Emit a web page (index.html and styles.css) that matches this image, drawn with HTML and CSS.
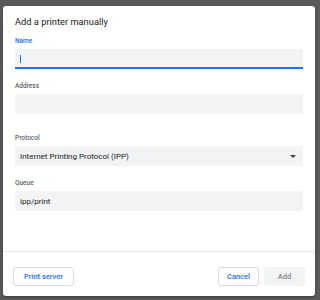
FILE: index.html
```html
<!DOCTYPE html>
<html>
<head>
<meta charset="utf-8">
<link rel="stylesheet" href="styles.css">
</head>
<body>
<div class="dialog">
  <div class="body">
    <div class="title">Add a printer manually</div>
    <div class="field">
      <div class="label active">Name</div>
      <div class="input focused"><span class="caret"></span></div>
    </div>
    <div class="field field-gap">
      <div class="label">Address</div>
      <div class="input"></div>
    </div>
    <div class="field">
      <div class="label">Protocol</div>
      <div class="input select">
        <span class="value">Internet Printing Protocol (IPP)</span>
        <span class="arrow"></span>
      </div>
    </div>
    <div class="field">
      <div class="label">Queue</div>
      <div class="input"><span class="value">ipp/print</span></div>
    </div>
  </div>
  <div class="footer">
    <button class="btn">Print server</button>
    <div class="spacer"></div>
    <button class="btn">Cancel</button>
    <button class="btn disabled">Add</button>
  </div>
</div>
</body>
</html>
```

FILE: styles.css
```css
html, body {
  margin: 0;
  padding: 0;
}
body {
  background: #5a5a5a;
  width: 320px;
  height: 300px;
  overflow: hidden;
  font-family: Roboto, "Liberation Sans", sans-serif;
  padding: 6px 0 0 3px;
  box-sizing: border-box;
}
.dialog {
  width: 312px;
  height: 290px;
  background: #fff;
  border-radius: 3px;
  box-shadow: 0 1px 3px rgba(0,0,0,0.35);
  display: flex;
  flex-direction: column;
}
.body {
  flex: 1;
  padding: 9px 12px 0 12px;
  border-bottom: 1px solid #e6e6e6;
}
.title {
  font-size: 9.3px;
  line-height: 14px;
  color: #202124;
  margin-bottom: 8px;
}
.field {
  margin-bottom: 13px;
}
.field-gap {
  margin-bottom: 20px;
}
.label {
  font-size: 6.5px;
  line-height: 8px;
  height: 8px;
  color: #5f6368;
  font-weight: 500;
  margin-bottom: 4px;
}
.label.active {
  color: #1a73e8;
}
.input {
  height: 20px;
  background: #f1f3f4;
  border-radius: 2px;
  box-sizing: border-box;
  display: flex;
  align-items: center;
  padding: 0 5px;
}
.input.focused {
  border-bottom: 2px solid #1a73e8;
  border-radius: 2px 2px 0 0;
  padding-top: 2px;
}
.caret {
  width: 1px;
  height: 8px;
  background: #1a73e8;
}
.value {
  font-size: 8px;
  font-weight: 400;
  color: #202124;
}
.select {
  justify-content: space-between;
}
.arrow {
  width: 0;
  height: 0;
  border-left: 3.5px solid transparent;
  border-right: 3.5px solid transparent;
  border-top: 3.5px solid #3c4043;
  margin-right: 2px;
}
.footer {
  height: 44px;
  display: flex;
  align-items: flex-start;
  padding: 15px 10px 0 10px;
  box-sizing: border-box;
  gap: 5px;
}
.spacer {
  flex: 1;
}
.btn {
  height: 19px;
  font-family: Roboto, "Liberation Sans", sans-serif;
  font-size: 7.5px;
  font-weight: 500;
  color: #1a73e8;
  background: #fff;
  border: 1px solid #dadce0;
  border-radius: 3px;
  padding: 0 8px;
  margin: 0;
}
.btn:first-child {
  width: 61px;
}
.btn.disabled {
  background: #f1f3f4;
  border-color: #f1f3f4;
  color: #80868b;
  width: 41px;
}
```
